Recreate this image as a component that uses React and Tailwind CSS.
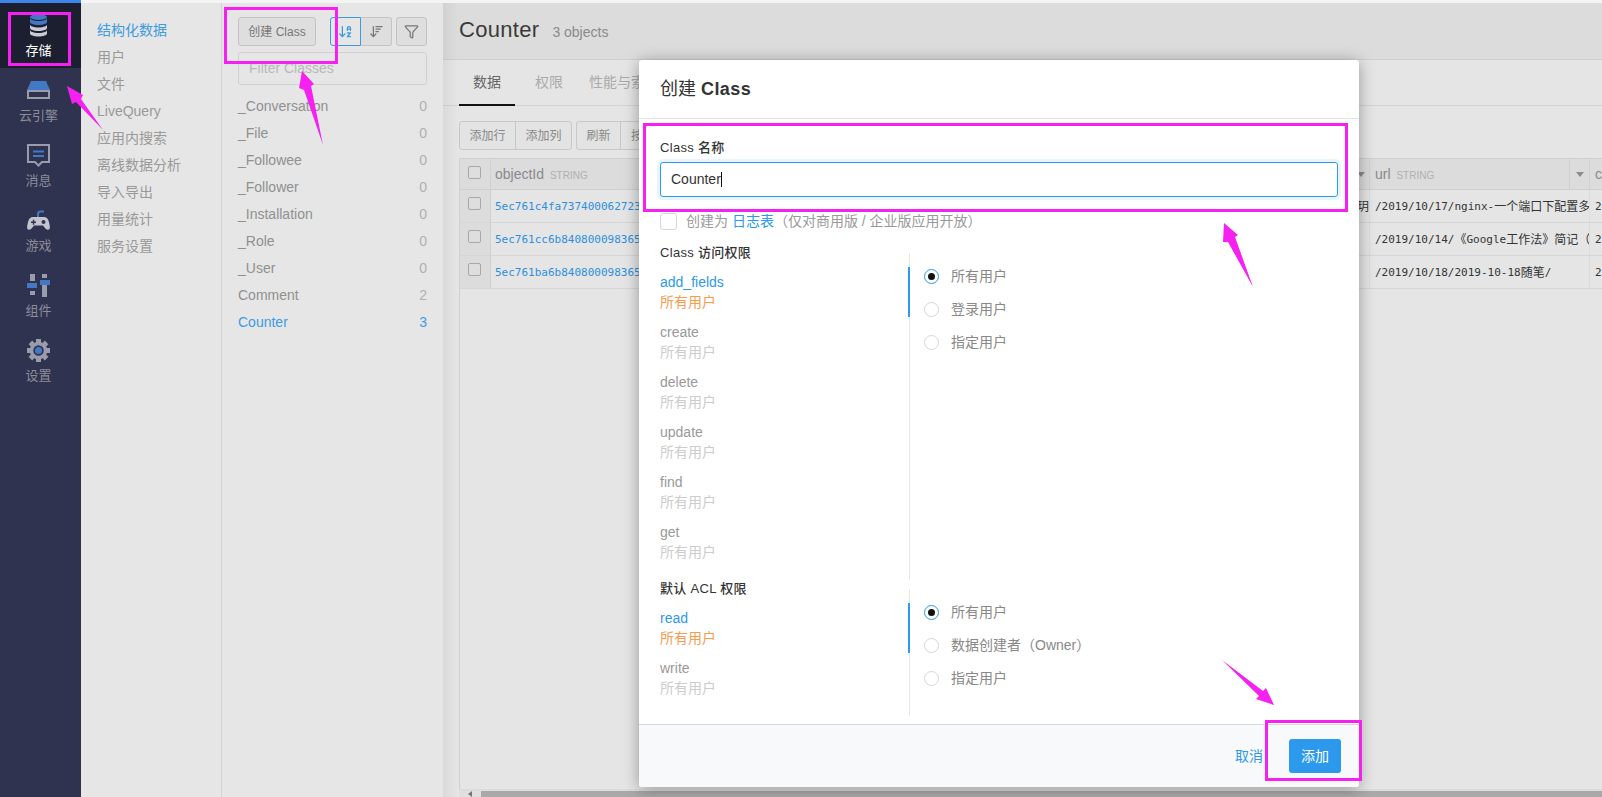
import React from "react";
import { ArrowDownAZ, ArrowDownWideNarrow, Filter } from "lucide-react";

const GRAY = "#9a9cac";
const BLUE = "#4278c4";

// sidebar icons
const DbIcon = () => (
  <svg width="23" height="23" viewBox="0 0 23 23">
    <ellipse cx="11.500" cy="3" rx="8.500" ry="3" fill={BLUE} />
    <path d="M3 4v4c0 1.600 3.800 3 8.500 3s8.500-1.400 8.500-3V4c0 1.600-3.800 3-8.500 3S3 5.600 3 4z" fill={BLUE} />
    <path d="M3 10.500v3.500c0 1.600 3.800 3 8.500 3s8.500-1.400 8.500-3v-3.500c0 1.600-3.800 3-8.500 3s-8.500-1.400-8.500-3z" fill="#c9cad4" />
    <path d="M3 16v3.500c0 1.600 3.800 3 8.500 3s8.500-1.400 8.500-3V16c0 1.600-3.800 3-8.500 3S3 17.600 3 16z" fill="#c9cad4" />
  </svg>
);

const EngineIcon = () => (
  <svg width="23" height="21" viewBox="0 0 23 21">
    <path d="M4 0h15l4 9H0z" fill={BLUE} />
    <path d="M0 9h23v9H0z" fill={GRAY} />
    <path d="M2 11h19v5H2z" fill="#30334f" />
  </svg>
);

const MessageIcon = () => (
  <svg width="23" height="23" viewBox="0 0 23 23">
    <path d="M1 1h21v17h-7l-3.500 3.500L8 18H1z" fill="none" stroke={GRAY} strokeWidth="2" />
    <path d="M6 6.500h11v2H6zM6 11h11v2H6z" fill={BLUE} />
  </svg>
);

const GameIcon = () => (
  <svg width="23" height="22" viewBox="0 0 23 22">
    <path d="M11 7V4c0-1.500 1-2.500 2.500-2.500H17" fill="none" stroke={BLUE} strokeWidth="2" />
    <path d="M6 7h11c2.500 0 4 1.500 4.800 4.500.8 3 1.500 6 .7 7.500-1 1.500-3 .8-4.500-1l-2-2.500H7l-2 2.500c-1.500 1.800-3.500 2.500-4.500 1-.8-1.500-.1-4.500.7-7.500C2 8.500 3.500 7 6 7z" fill="#c3c4ce" />
    <path d="M4 11.500h5v1.500H4zM5.800 9.700h1.500v5H5.800z" fill="#30334f" />
    <circle cx="16.500" cy="12" r="2" fill="#30334f" />
  </svg>
);

const ComponentIcon = () => (
  <svg width="23" height="23" viewBox="0 0 23 23">
    <path d="M3 0h5v7H3zM15 0h5v4h-5zM15 11h5v12h-5zM3 17h5v4H3z" fill={GRAY} />
    <path d="M0 9h10v5H0zM13 6h10v5H13z" fill={BLUE} />
  </svg>
);

const GearIcon = () => (
  <svg width="23" height="23" viewBox="0 0 23 23">
    <g fill={GRAY}>
      {[0, 45, 90, 135, 180, 225, 270, 315].map((a) => (
        <rect key={a} x="9" y="0" width="5" height="5" transform={`rotate(${a} 11.500 11.500)`} />
      ))}
    </g>
    <circle cx="11.500" cy="11.500" r="7" fill="none" stroke={GRAY} strokeWidth="3.500" />
    <circle cx="11.500" cy="11.500" r="3.500" fill={BLUE} />
  </svg>
);

const navItems = [
  { label: "存储", icon: DbIcon, active: true },
  { label: "云引擎", icon: EngineIcon },
  { label: "消息", icon: MessageIcon },
  { label: "游戏", icon: GameIcon },
  { label: "组件", icon: ComponentIcon },
  { label: "设置", icon: GearIcon },
];

const menuItems = ["结构化数据", "用户", "文件", "LiveQuery", "应用内搜索", "离线数据分析", "导入导出", "用量统计", "服务设置"];

const classes = [
  ["_Conversation", 0],
  ["_File", 0],
  ["_Followee", 0],
  ["_Follower", 0],
  ["_Installation", 0],
  ["_Role", 0],
  ["_User", 0],
  ["Comment", 2],
  ["Counter", 3],
];

const rows = [
  {
    id: "5ec761c4fa7374000627234",
    cut: "玥",
    url: (
      <>
        /2019/10/17/nginx-<span className="text-[12px]">一个端口下配置多</span>
      </>
    ),
  },
  {
    id: "5ec761cc6b84080009836512",
    url: (
      <>
        /2019/10/14/<span className="text-[12px]">《</span>Google<span className="text-[12px]">工作法》简记（</span>
      </>
    ),
  },
  {
    id: "5ec761ba6b84080009836501",
    url: (
      <>
        /2019/10/18/2019-10-18<span className="text-[12px]">随笔</span>/
      </>
    ),
  },
];

const classPerms = ["add_fields", "create", "delete", "update", "find", "get"];
const aclPerms = ["read", "write"];

const Check = () => <div className="w-[13px] h-[13px] rounded-[2px] border border-[#a8a8a8] bg-[#dedede]" />;

const Caret = () => <div className="w-0 h-0 border-x-[4px] border-x-transparent border-t-[5px] border-t-[#8c8c8c]" />;

const Radio = ({ on, label }) => (
  <div className="h-[33px] flex items-center gap-[12px]">
    <div
      className={`w-[15px] h-[15px] rounded-full border flex items-center justify-center ${
        on ? "border-[#2c99ec]" : "border-[#d6d6d6]"
      }`}
    >
      {on && <div className="w-[7px] h-[7px] rounded-full bg-[#111]" />}
    </div>
    <span className="text-[14px] text-[#888]">{label}</span>
  </div>
);

const Perm = ({ name, active }) => (
  <div className={`h-[50px] pt-[5px] leading-[20px] text-[14px] ${active ? "border-r-2 border-[#2c99ec]" : ""}`}>
    <div className={active ? "text-[#2c99ec]" : "text-[#999]"}>{name}</div>
    <div className={active ? "text-[#f89c4e]" : "text-[#ccc]"}>所有用户</div>
  </div>
);

const PermSection = ({ title, perms, radios }) => (
  <div className="flex">
    <div className="w-[250px] relative z-10 pb-[13px]">
      <div className="h-[18px] leading-[18px] text-[13px] font-medium tracking-[0.3px] text-[#333] mb-[5px]">{title}</div>
      {perms.map((p, i) => (
        <Perm key={p} name={p} active={i === 0} />
      ))}
    </div>
    <div className="flex-1 mt-[9px] -ml-px border-l border-[#e8e8e8] pl-[14px] pt-[7px]">
      {radios.map((r, i) => (
        <Radio key={r} label={r} on={i === 0} />
      ))}
    </div>
  </div>
);

const Box = ({ className }) => <div className={`absolute border-[3px] border-[#f620f0] ${className}`} />;

export default function App() {
  return (
    <div className="relative w-[1602px] h-[797px] overflow-hidden flex font-['Liberation_Sans','Noto_Sans_CJK_SC',sans-serif] bg-[#e5e5e5]">
      {/* sidebar */}
      <div className="w-[81px] shrink-0 bg-[#30334f] border-t-[3px] border-[#3f86ea]">
        {navItems.map(({ label, icon: Icon, active }) => (
          <div
            key={label}
            className={`h-[65px] flex flex-col items-center justify-end pb-[9px] pr-[4px] gap-[6px] ${active ? "bg-[#1c1f30]" : ""}`}
          >
            <Icon />
            <span className={`text-[13px] leading-[16px] ${active ? "text-white" : "text-[#8b8d9b]"}`}>{label}</span>
          </div>
        ))}
      </div>

      <div className="flex-1 flex flex-col min-w-0">
        <div className="h-[3px] bg-[#f4f4f4]" />
        <div className="flex-1 flex min-h-0">
          {/* menu */}
          <div className="w-[141px] shrink-0 bg-[#e6e6e6] border-r border-[#d4d4d4] pt-[14px] pl-[16px]">
            {menuItems.map((m, i) => (
              <div key={m} className={`h-[27px] leading-[27px] text-[14px] ${i === 0 ? "text-[#3d9be0]" : "text-[#999]"}`}>
                {m}
              </div>
            ))}
          </div>

          {/* class list */}
          <div className="w-[221px] shrink-0 bg-[#e6e6e6] pt-[14px] pl-[16px] pr-[16px]">
            <div className="flex items-center">
              <button className="w-[78px] h-[29px] rounded-[3px] border border-[#c4c4c4] bg-[#dedede] text-[12px] text-[#777]">
                创建 Class
              </button>
              <div className="ml-[14px] flex">
                <div className="w-[31px] h-[29px] rounded-l-[3px] border border-[#3d9be0] flex items-center justify-center">
                  <ArrowDownAZ size={15} className="text-[#3d9be0]" />
                </div>
                <div className="w-[31px] h-[29px] rounded-r-[3px] border border-l-0 border-[#c4c4c4] bg-[#dedede] flex items-center justify-center">
                  <ArrowDownWideNarrow size={15} className="text-[#777]" />
                </div>
              </div>
              <div className="ml-[4px] w-[31px] h-[29px] rounded-[3px] border border-[#c4c4c4] bg-[#dedede] flex items-center justify-center">
                <Filter size={15} className="text-[#777]" />
              </div>
            </div>
            <div className="mt-[6px] h-[33px] rounded-[3px] border border-[#d0d0d0] pl-[10px] text-[14px] leading-[31px] text-[#b8b8b8]">
              Filter Classes
            </div>
            <div className="mt-[8px]">
              {classes.map(([name, n]) => (
                <div
                  key={name}
                  className={`h-[27px] leading-[27px] text-[14px] flex justify-between ${
                    name === "Counter" ? "text-[#3d9be0]" : "text-[#909090]"
                  }`}
                >
                  <span>{name}</span>
                  <span className={name === "Counter" ? "" : "text-[#b0b0b0]"}>{n}</span>
                </div>
              ))}
            </div>
          </div>

          {/* main */}
          <div className="relative flex-1 min-w-0 flex flex-col">
            <div className="h-[57px] shrink-0 bg-[#dcdcdc] border-b border-[#cfcfcf] pl-[16px] flex items-baseline pt-[10px]">
              <span className="text-[22px] tracking-[0.3px] text-[#3a3a3a]">Counter</span>
              <span className="ml-[13px] text-[14px] text-[#8a8a8a]">3 objects</span>
            </div>
            <div className="h-[46px] shrink-0 border-b border-[#d4d4d4] pl-[16px] flex text-[14px] text-[#aaa]">
              <div className="w-[56px] h-[46px] -mb-px border-b-2 border-[#111] text-[#666] flex items-center justify-center">数据</div>
              <div className="ml-[6px] px-[14px] flex items-center">权限</div>
              <div className="px-[12px] flex items-center">性能与索引</div>
            </div>
            <div className="shrink-0 mt-[15px] pl-[16px] flex gap-[4px] text-[12px] text-[#888]">
              <div className="flex h-[29px] rounded-[3px] border border-[#c8c8c8] bg-[#e3e3e3]">
                <div className="w-[56px] flex items-center justify-center border-r border-[#c8c8c8]">添加行</div>
                <div className="w-[55px] flex items-center justify-center">添加列</div>
              </div>
              <div className="flex h-[29px] rounded-[3px] border border-[#c8c8c8] bg-[#e3e3e3]">
                <div className="w-[44px] flex items-center justify-center border-r border-[#c8c8c8]">刷新</div>
                <div className="w-[60px] pl-[10px] flex items-center">按</div>
              </div>
            </div>

            {/* table */}
            <div className="mt-[8px] ml-[16px] flex-1 min-h-0 border-l border-[#d0d0d0]">
              <div className="flex h-[32px] bg-[#dcdcdc] border-y border-[#d0d0d0]">
                <div className="w-[31px] shrink-0 pt-[7px] pl-[8px] border-r border-[#d0d0d0]">
                  <Check />
                </div>
                <div className="flex-1 flex items-center justify-between pl-[4px] pr-[4px]">
                  <span className="text-[14px] text-[#8a8a8a]">
                    objectId <span className="ml-[2px] text-[10px] text-[#b0b0b0]">STRING</span>
                  </span>
                  <Caret />
                </div>
                <div className="w-[200px] shrink-0 flex items-center pl-[5px] border-l border-[#d0d0d0]">
                  <span className="text-[14px] text-[#8a8a8a]">
                    url <span className="ml-[2px] text-[10px] text-[#b0b0b0]">STRING</span>
                  </span>
                </div>
                <div className="w-[20px] shrink-0 flex items-center justify-center border-l border-[#d0d0d0]">
                  <Caret />
                </div>
                <div className="w-[13px] shrink-0 pl-[5px] flex items-center text-[14px] text-[#8a8a8a] border-l border-[#d0d0d0] overflow-hidden">
                  c
                </div>
              </div>
              {rows.map((r) => (
                <div key={r.id} className="flex h-[33px] border-b border-[#d6d6d6] font-['DejaVu_Sans_Mono','Noto_Sans_CJK_SC',monospace] text-[11px]">
                  <div className="w-[31px] shrink-0 pt-[7px] pl-[8px] bg-[#dcdcdc] border-r border-[#d0d0d0]">
                    <Check />
                  </div>
                  <div className="flex-1 min-w-0 flex items-center justify-between pl-[4px] pt-[2px] text-[#2c8fdc] overflow-hidden">
                    <span>{r.id}</span>
                    <span className="text-[12px] text-[#333]">{r.cut}</span>
                  </div>
                  <div className="w-[220px] shrink-0 flex items-center pl-[5px] pt-[2px] border-l border-[#dcdcdc] text-[#333] whitespace-nowrap overflow-hidden">
                    {r.url}
                  </div>
                  <div className="w-[13px] shrink-0 pl-[5px] pt-[2px] flex items-center text-[#333] border-l border-[#dcdcdc] overflow-hidden">2</div>
                </div>
              ))}
            </div>

            {/* horizontal scrollbar */}
            <div className="shrink-0 ml-[16px] h-[8px] border-t-2 border-[#dcdcdc] flex bg-[#e0e0e0]">
              <div className="w-[22px] flex items-end justify-center">
                <div className="w-0 h-0 border-y-[3px] border-y-transparent border-r-[4px] border-r-[#777]" />
              </div>
              <div className="flex-1 bg-[#a9a9a9]" />
            </div>

            {/* edge shadow of the class list */}
            <div className="absolute left-0 top-0 bottom-0 w-[15px] bg-gradient-to-r from-black/5 to-transparent" />
          </div>
        </div>
      </div>

      {/* modal */}
      <div className="absolute left-[639px] top-[60px] w-[720px] h-[727px] bg-white rounded-[3px] shadow-[0_2px_16px_rgba(0,0,0,0.35)] flex flex-col overflow-hidden">
        <div className="h-[59px] shrink-0 border-b border-[#e2e2e2] pl-[21px] flex items-center text-[18px] text-[#333]">
          创建&nbsp;<span className="font-bold tracking-[0.4px]">Class</span>
        </div>
        <div className="flex-1 px-[21px] pt-[20px]">
          <div className="h-[18px] leading-[18px] text-[13px] font-medium tracking-[0.3px] text-[#333]">Class 名称</div>
          <div className="mt-[5px] h-[35px] rounded-[3px] border border-[#2c99ec] ring-[3px] ring-[#2c99ec]/10 pl-[10px] flex items-center text-[14px] text-[#333]">
            Counter
            <span className="w-px h-[15px] bg-[#111]" />
          </div>
          <div className="mt-[16px] h-[17px] flex items-center text-[14px] text-[#999]">
            <div className="w-[17px] h-[17px] rounded-[3px] border border-[#d6d6d6]" />
            <span className="ml-[9px]">
              创建为 <span className="text-[#2c99ec]">日志表</span>（仅对商用版 / 企业版应用开放）
            </span>
          </div>
          <div className="mt-[14px]">
            <PermSection title="Class 访问权限" perms={classPerms} radios={["所有用户", "登录用户", "指定用户"]} />
            <PermSection title="默认 ACL 权限" perms={aclPerms} radios={["所有用户", "数据创建者（Owner）", "指定用户"]} />
          </div>
        </div>
        <div className="h-[63px] shrink-0 border-t border-[#d8d8d8] bg-[#f8f9fb] flex items-center justify-end pr-[18px] gap-[26px]">
          <span className="text-[14px] text-[#2c99ec]">取消</span>
          <button className="w-[52px] h-[34px] rounded-[3px] bg-[#2c99ec] text-[14px] text-white">添加</button>
        </div>
      </div>

      {/* annotations */}
      <Box className="left-[8px] top-[12px] w-[63px] h-[54px]" />
      <Box className="left-[224px] top-[7px] w-[114px] h-[57px]" />
      <Box className="left-[643px] top-[123px] w-[705px] h-[89px]" />
      <Box className="left-[1265px] top-[720px] w-[97px] h-[61px]" />
      <svg className="absolute left-0 top-0 pointer-events-none" width="1602" height="797" fill="#f620f0">
        <polygon points="67,86 83,95 81,99 103,130 76,102 72,104" />
        <polygon points="302,71 314,84 311,86 323,145 304,90 299,88" />
        <polygon points="1224,223 1238,235 1235,237 1253,287 1228,242 1223,242" />
        <polygon points="1222,660 1263,691 1266,688 1274,705 1256,699 1259,696" />
      </svg>
    </div>
  );
}
